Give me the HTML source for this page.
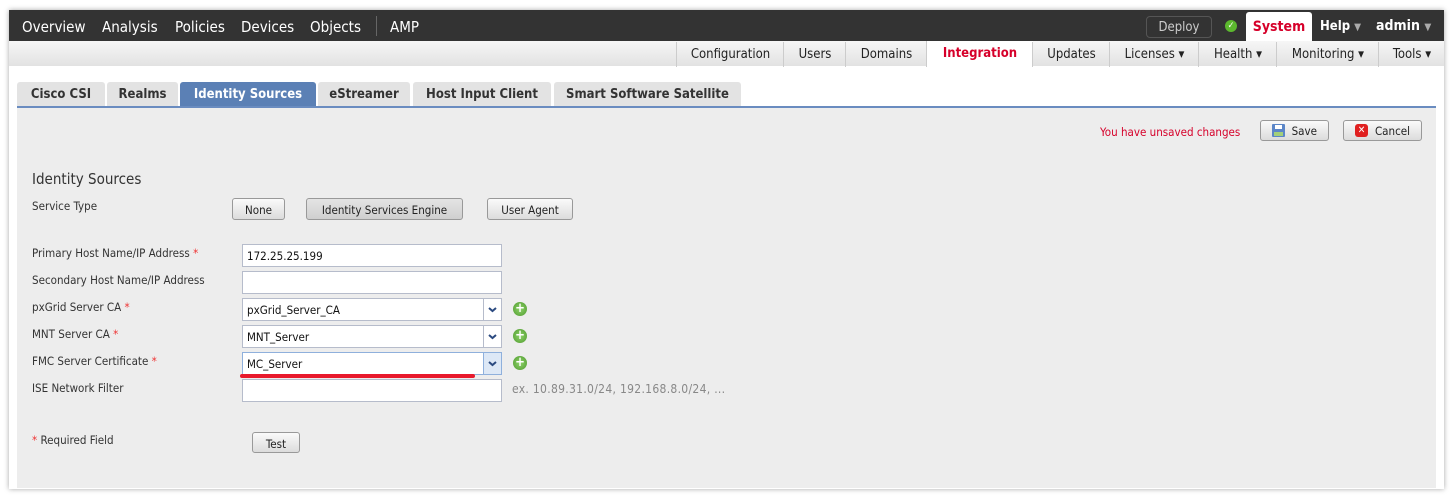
<!DOCTYPE html>
<html><head><style>
body{margin:0;width:1454px;height:497px;background:#fff;position:relative;overflow:hidden;font-family:"DejaVu Sans Condensed","Liberation Sans",sans-serif;}
.a{position:absolute;white-space:nowrap;}
#page{left:9px;top:10px;width:1435px;height:479px;background:#fff;box-shadow:0 0 5px rgba(0,0,0,.35);}
#top{left:9px;top:10px;width:1435px;height:31px;background:#333;}
.tn{color:#fff;font-size:15px;top:18px;}
#sub{left:9px;top:41px;width:1435px;height:25px;background:linear-gradient(#f6f6f6,#e2e2e2);}
.sc{top:42px;height:25px;border-left:1px solid #ccc;font-size:13px;color:#222;text-align:center;line-height:25px;}
.tab{top:82px;height:24px;background:#e3e3e3;border-radius:3px 3px 0 0;font-size:13px;font-weight:bold;color:#333;text-align:center;line-height:26px;}
#panel{left:17px;top:108px;width:1419px;height:380px;background:#ededed;}
.lbl{font-size:11.5px;color:#333;}
.btn{border:1px solid #999;border-radius:3px;background:linear-gradient(#fafafa,#dcdcdc);font-size:11.5px;color:#222;text-align:center;box-sizing:border-box;}
.inp{left:242px;width:260px;height:23px;box-sizing:border-box;border:1px solid #b6bccb;background:#fff;font-size:11.5px;line-height:23px;padding-left:4px;color:#111;}
.dd{position:absolute;right:0;top:0;width:17px;height:21px;border-left:1px solid #b6bccb;background:#fff;}
.plus{left:513px;width:14px;height:14px;border-radius:50%;background:radial-gradient(#8fd36a,#4e9a2e);color:#fff;font-size:13px;font-weight:bold;line-height:14px;text-align:center;}
.star{color:#e33;}
</style></head><body>
<div class="a" id="page"></div>
<div class="a" id="top"></div>
<div class="a tn" style="left:22px">Overview</div>
<div class="a tn" style="left:102px">Analysis</div>
<div class="a tn" style="left:175px">Policies</div>
<div class="a tn" style="left:241px">Devices</div>
<div class="a tn" style="left:310px">Objects</div>
<div class="a" style="left:376px;top:16px;width:1px;height:20px;background:#666"></div>
<div class="a tn" style="left:390px">AMP</div>
<div class="a" style="left:1146px;top:16px;width:64px;height:20px;border:1px solid #555;border-radius:4px;color:#ccc;font-size:13px;text-align:center;line-height:21px;">Deploy</div>
<div class="a" style="left:1225px;top:20px;width:12px;height:12px;border-radius:50%;background:#5cb82e;color:#fff;font-size:9px;line-height:12px;text-align:center">✓</div>
<div class="a" style="left:1246px;top:12px;width:66px;height:30px;background:#fff;border-radius:3px 3px 0 0;color:#d6002a;font-weight:bold;font-size:14px;text-align:center;line-height:30px">System</div>
<div class="a" style="left:1320px;top:19px;color:#fff;font-size:13px;font-weight:bold">Help <span style="color:#aaa;font-size:10px">▼</span></div>
<div class="a" style="left:1376px;top:18px;color:#fff;font-size:14px;font-weight:bold">admin <span style="color:#aaa;font-size:10px">▼</span></div>
<div class="a" id="sub"></div>
<div class="a sc" style="left:676px;width:107px">Configuration</div>
<div class="a sc" style="left:783px;width:62px">Users</div>
<div class="a sc" style="left:845px;width:81px">Domains</div>
<div class="a sc" style="left:926px;width:106px;background:#fff;color:#d6002a;font-weight:bold;top:41px;height:26px;line-height:26px">Integration</div>
<div class="a sc" style="left:1032px;width:77px">Updates</div>
<div class="a sc" style="left:1109px;width:89px">Licenses ▾</div>
<div class="a sc" style="left:1198px;width:78px">Health ▾</div>
<div class="a sc" style="left:1276px;width:102px">Monitoring ▾</div>
<div class="a sc" style="left:1378px;width:66px">Tools ▾</div>
<div class="a tab" style="left:17px;width:88px">Cisco CSI</div>
<div class="a tab" style="left:107px;width:71px">Realms</div>
<div class="a tab" style="left:180px;width:136px;background:#5b80b5;color:#fff">Identity Sources</div>
<div class="a tab" style="left:318px;width:92px">eStreamer</div>
<div class="a tab" style="left:413px;width:138px">Host Input Client</div>
<div class="a tab" style="left:554px;width:187px">Smart Software Satellite</div>
<div class="a" style="left:17px;top:106px;width:1419px;height:2px;background:#6a8cc0"></div>
<div class="a" id="panel"></div>
<div class="a" style="left:1100px;top:125px;color:#d6002a;font-size:11.5px">You have unsaved changes</div>
<div class="a btn" style="left:1260px;top:120px;width:69px;height:21px;line-height:21px;text-align:right;padding-right:11px"><span style="position:absolute;left:11px;top:3px;width:13px;height:13px;background:#5b86c8;border-radius:1px"><span style="position:absolute;left:3px;top:1px;width:7px;height:4px;background:#fff"></span><span style="position:absolute;left:2px;top:8px;width:9px;height:4px;background:#a3d07a"></span></span>Save</div>
<div class="a btn" style="left:1343px;top:120px;width:79px;height:21px;line-height:21px;text-align:right;padding-right:11px"><span style="position:absolute;left:11px;top:3px;width:13px;height:13px;background:#e02020;border-radius:3px;color:#fff;font-size:10px;line-height:13px;text-align:center;font-weight:bold">✕</span>Cancel</div>
<div class="a" style="left:32px;top:170px;font-size:15px;color:#333">Identity Sources</div>
<div class="a lbl" style="left:32px;top:199px">Service Type</div>
<div class="a btn" style="left:232px;top:198px;width:53px;height:22px;line-height:22px">None</div>
<div class="a btn" style="left:306px;top:198px;width:157px;height:22px;line-height:22px;background:linear-gradient(#e4e4e4,#cfcfcf)">Identity Services Engine</div>
<div class="a btn" style="left:487px;top:198px;width:86px;height:22px;line-height:22px">User Agent</div>
<div class="a lbl" style="left:32px;top:246px">Primary Host Name/IP Address <span class="star">*</span></div>
<div class="a inp" style="top:244px">172.25.25.199</div>
<div class="a lbl" style="left:32px;top:273px">Secondary Host Name/IP Address</div>
<div class="a inp" style="top:271px"></div>
<div class="a lbl" style="left:32px;top:300px">pxGrid Server CA <span class="star">*</span></div>
<div class="a inp" style="top:298px">pxGrid_Server_CA<div class="dd"><svg width="17" height="21"><path d="M5 9l3.5 3 3.5-3" stroke="#2b4a80" stroke-width="2" fill="none"/></svg></div></div>
<div class="a plus" style="top:302px">+</div>
<div class="a lbl" style="left:32px;top:327px">MNT Server CA <span class="star">*</span></div>
<div class="a inp" style="top:325px">MNT_Server<div class="dd"><svg width="17" height="21"><path d="M5 9l3.5 3 3.5-3" stroke="#2b4a80" stroke-width="2" fill="none"/></svg></div></div>
<div class="a plus" style="top:329px">+</div>
<div class="a lbl" style="left:32px;top:354px">FMC Server Certificate <span class="star">*</span></div>
<div class="a inp" style="top:352px;border-color:#8fb0dc">MC_Server<div class="dd" style="background:#dde8f6;border-color:#8fb0dc"><svg width="17" height="21"><path d="M5 9l3.5 3 3.5-3" stroke="#2b4a80" stroke-width="2" fill="none"/></svg></div></div>
<div class="a plus" style="top:356px">+</div>
<div class="a" style="left:240px;top:374px;width:235px;height:4px;background:#e8192c;border-radius:2px"></div>
<div class="a lbl" style="left:32px;top:381px">ISE Network Filter</div>
<div class="a inp" style="top:379px"></div>
<div class="a" style="left:512px;top:382px;font-size:12px;letter-spacing:0.3px;color:#888">ex. 10.89.31.0/24, 192.168.8.0/24, ...</div>
<div class="a lbl" style="left:32px;top:433px"><span class="star">*</span> Required Field</div>
<div class="a btn" style="left:252px;top:432px;width:48px;height:21px;line-height:22px">Test</div>
</body></html>
